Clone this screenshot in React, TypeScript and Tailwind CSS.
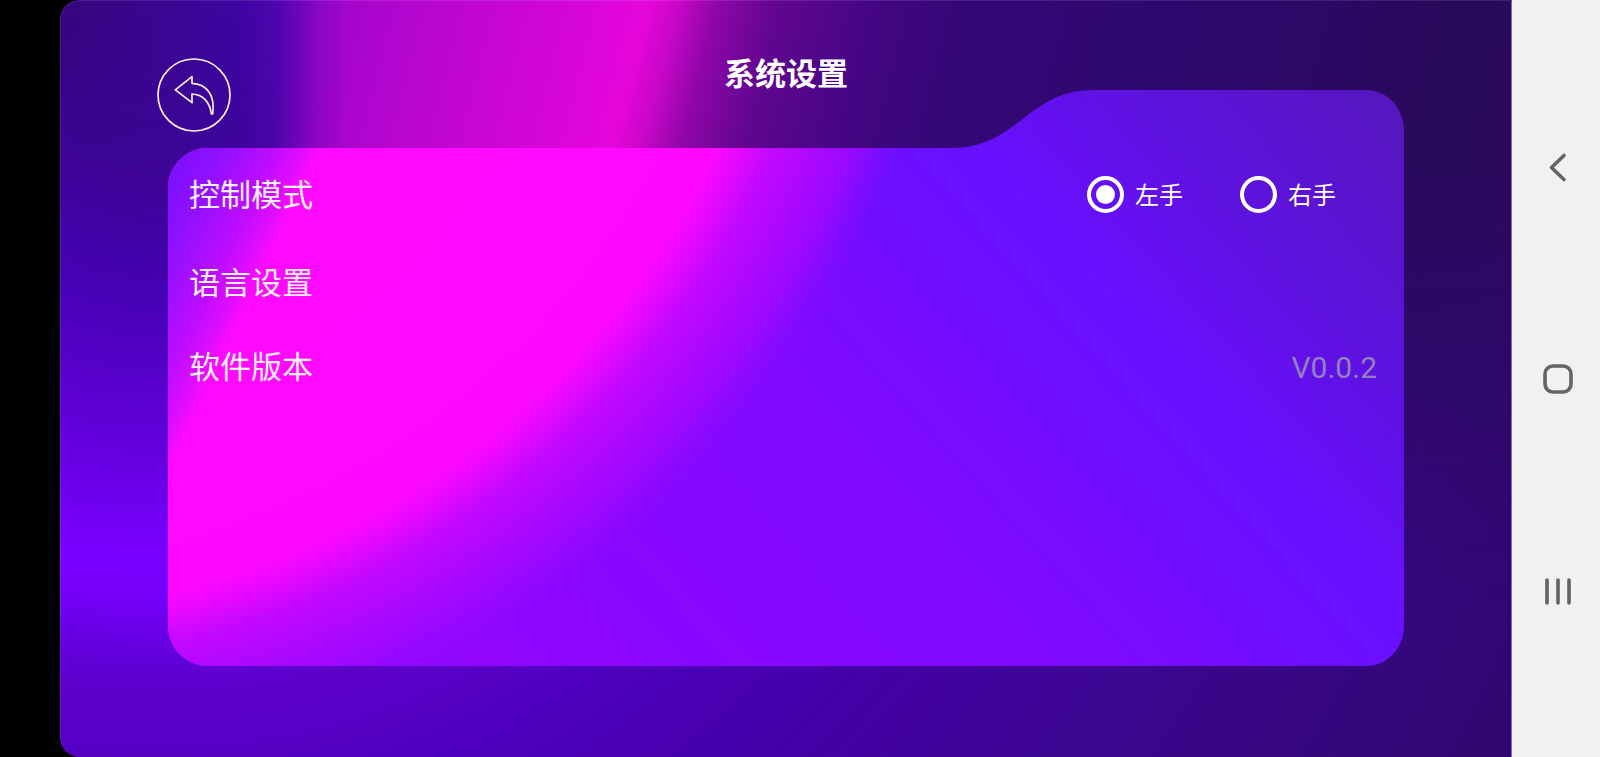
import { useState } from "react";

function Backdrop() {
  return (
    <svg
      className="absolute inset-0 h-full w-full"
      viewBox="60 0 1452 757"
      preserveAspectRatio="none"
      aria-hidden="true"
    >
      <defs>
        <radialGradient id="base" gradientUnits="userSpaceOnUse" cx="155" cy="55" r="1500">
          <stop offset="0" stopColor="#3a0488" />
          <stop offset="0.07" stopColor="#3c0492" />
          <stop offset="0.15" stopColor="#4402b0" />
          <stop offset="0.27" stopColor="#6600e0" />
          <stop offset="0.335" stopColor="#7900ff" />
          <stop offset="0.36" stopColor="#7600fa" />
          <stop offset="0.395" stopColor="#6400de" />
          <stop offset="0.425" stopColor="#5c00ca" />
          <stop offset="0.46" stopColor="#5800c6" />
          <stop offset="0.5" stopColor="#4e00be" />
          <stop offset="0.62" stopColor="#4400a8" />
          <stop offset="0.77" stopColor="#3c0690" />
          <stop offset="1" stopColor="#300870" />
        </radialGradient>
        <linearGradient id="corner" gradientUnits="userSpaceOnUse" x1="60" y1="0" x2="290" y2="90">
          <stop offset="0" stopColor="#36067a" />
          <stop offset="1" stopColor="#4006b4" />
        </linearGradient>
        <linearGradient id="beam" gradientUnits="userSpaceOnUse" x1="300" y1="0" x2="1490" y2="300">
          <stop offset="0" stopColor="#9a06c8" />
          <stop offset="0.1" stopColor="#b606d0" />
          <stop offset="0.23" stopColor="#d806da" />
          <stop offset="0.275" stopColor="#e606da" />
          <stop offset="0.3" stopColor="#c806c8" />
          <stop offset="0.33" stopColor="#9006a8" />
          <stop offset="0.38" stopColor="#600690" />
          <stop offset="0.45" stopColor="#460684" />
          <stop offset="0.53" stopColor="#340776" />
          <stop offset="0.66" stopColor="#2f0870" />
          <stop offset="0.8" stopColor="#2b0966" />
          <stop offset="0.93" stopColor="#280a5a" />
          <stop offset="1" stopColor="#2a0a5c" />
        </linearGradient>
        <linearGradient id="sideFade" gradientUnits="userSpaceOnUse" x1="235" y1="0" x2="350" y2="0">
          <stop offset="0" stopColor="#fff" stopOpacity="0" />
          <stop offset="0.35" stopColor="#fff" stopOpacity="0.15" />
          <stop offset="0.7" stopColor="#fff" stopOpacity="0.75" />
          <stop offset="1" stopColor="#fff" />
        </linearGradient>
        <linearGradient id="downFade" gradientUnits="userSpaceOnUse" x1="0" y1="148" x2="0" y2="600">
          <stop offset="0" stopColor="#fff" />
          <stop offset="0.5" stopColor="#fff" stopOpacity="0.6" />
          <stop offset="1" stopColor="#fff" stopOpacity="0" />
        </linearGradient>
        <linearGradient id="cornerFade" gradientUnits="userSpaceOnUse" x1="0" y1="0" x2="0" y2="200">
          <stop offset="0" stopColor="#fff" />
          <stop offset="1" stopColor="#fff" stopOpacity="0" />
        </linearGradient>
        <mask id="sideMask" maskUnits="userSpaceOnUse" x="60" y="0" width="1452" height="757">
          <rect x="60" width="1452" height="757" fill="url(#sideFade)" />
        </mask>
        <mask id="downMask" maskUnits="userSpaceOnUse" x="60" y="0" width="1452" height="757">
          <rect x="60" width="1452" height="757" fill="url(#downFade)" />
        </mask>
        <mask id="cornerMask" maskUnits="userSpaceOnUse" x="60" y="0" width="1452" height="757">
          <rect x="60" width="1452" height="757" fill="url(#cornerFade)" />
        </mask>
      </defs>
      <rect x="60" width="1452" height="757" fill="url(#base)" />
      <g mask="url(#cornerMask)">
        <rect x="60" width="400" height="200" fill="url(#corner)" />
      </g>
      <g mask="url(#sideMask)">
        <g mask="url(#downMask)">
          <rect x="60" width="1452" height="757" fill="url(#beam)" />
        </g>
      </g>
    </svg>
  );
}

function PanelShape() {
  const outline =
    "M168 188C168 166 186 148 208 148H952C977 148 996 139 1012 127C1038 108 1055 90 1095 90H1366C1387 90 1404 108 1404 130V626C1404 648 1387 666 1366 666H208C186 666 168 648 168 626Z";
  return (
    <svg
      className="absolute inset-0 h-full w-full"
      viewBox="168 90 1236 576"
      preserveAspectRatio="none"
      aria-hidden="true"
    >
      <defs>
        <linearGradient id="field" gradientUnits="userSpaceOnUse" x1="-48" y1="44" x2="707" y2="-640">
          <stop offset="0" stopColor="#9006ff" />
          <stop offset="0.38" stopColor="#800aff" />
          <stop offset="0.5" stopColor="#780cff" />
          <stop offset="0.58" stopColor="#6e0eff" />
          <stop offset="0.68" stopColor="#6810ff" />
          <stop offset="0.74" stopColor="#6510f2" />
          <stop offset="0.82" stopColor="#5e12e0" />
          <stop offset="1" stopColor="#5616c0" />
        </linearGradient>
        <radialGradient id="glow" gradientUnits="userSpaceOnUse" cx="-20" cy="-200" r="1000">
          <stop offset="0" stopColor="#ff0cff" />
          <stop offset="0.81" stopColor="#ff08ff" />
          <stop offset="0.83" stopColor="#ee08ff" />
          <stop offset="0.865" stopColor="#c408ff" />
          <stop offset="0.9" stopColor="#b008ff" />
          <stop offset="0.94" stopColor="#a008ff" stopOpacity="0.85" />
          <stop offset="0.985" stopColor="#8c0aff" stopOpacity="0" />
          <stop offset="1" stopColor="#8c0aff" stopOpacity="0" />
        </radialGradient>
        <linearGradient id="edge" gradientUnits="userSpaceOnUse" x1="168" y1="180" x2="287" y2="236">
          <stop offset="0" stopColor="#7c10ff" />
          <stop offset="0.3" stopColor="#9410ff" />
          <stop offset="0.65" stopColor="#c00cff" />
          <stop offset="0.85" stopColor="#e40cff" />
          <stop offset="1" stopColor="#ff0cff" stopOpacity="0" />
        </linearGradient>
        <clipPath id="panelClip">
          <path d={outline} />
        </clipPath>
      </defs>
      <g clipPath="url(#panelClip)">
        <rect x="168" y="90" width="1236" height="576" fill="url(#field)" />
        <rect x="168" y="90" width="1236" height="576" fill="url(#glow)" />
        <rect x="168" y="90" width="300" height="576" fill="url(#edge)" />
      </g>
    </svg>
  );
}

function HandOption({
  label,
  checked,
  onSelect,
}: {
  label: string;
  checked: boolean;
  onSelect: () => void;
}) {
  return (
    <label className="flex cursor-pointer items-start gap-[11px] text-2xl leading-10">
      <input
        type="radio"
        name="hand"
        checked={checked}
        onChange={onSelect}
        className="peer sr-only"
      />
      <span className="flex size-[37px] items-center justify-center rounded-full border-4 border-white peer-checked:[&>span]:bg-white">
        <span className="size-[19px] rounded-full" />
      </span>
      {label}
    </label>
  );
}

function NavButton({ label, children }: { label: string; children: React.ReactNode }) {
  return (
    <button type="button" aria-label={label} className="flex h-[28%] w-full items-center justify-center">
      <svg
        width="32"
        height="32"
        viewBox="0 0 32 32"
        fill="none"
        stroke="#646464"
        strokeWidth="3.6"
        strokeLinecap="round"
        strokeLinejoin="round"
      >
        {children}
      </svg>
    </button>
  );
}

export default function App() {
  const [hand, setHand] = useState("left");

  return (
    <div className="flex h-screen bg-black font-['Roboto','Noto_Sans_CJK_SC',sans-serif]">
      <main className="relative ml-15 flex flex-1 flex-col overflow-hidden rounded-l-[20px] text-white">
        <Backdrop />
        <div className="pointer-events-none absolute inset-0 rounded-l-[20px] border-t border-l border-r border-white/10 border-r-white/40" />

        <header className="relative z-10 grid h-[90px] shrink-0 grid-cols-[1fr_auto_1fr] items-start px-[97px] pt-[58px]">
          <button type="button" aria-label="返回" className="size-[74px]">
            <svg
              width="74"
              height="74"
              viewBox="0 0 74 74"
              fill="none"
              stroke="#fdf0ff"
              strokeWidth="1.7"
              strokeLinejoin="round"
            >
              <circle cx="37" cy="37" r="36" />
              <path d="M18.3 31.8 35 18.7V25.3C50 26 58.5 37.5 55.6 56H54.4C53 44 45.5 36.2 35 36V44.7Z" />
            </svg>
          </button>
          <h1 className="text-[31px] leading-[34px] font-bold">系统设置</h1>
        </header>

        <section className="relative mx-[108px] mb-[91px] flex-1">
          <PanelShape />
          <div className="relative flex flex-col pt-[62px] pr-[27px] pl-[21px] text-[31px] leading-10 text-[#fff0ff]">
            <div role="radiogroup" aria-labelledby="mode" className="flex h-[88px] items-center justify-between">
              <span id="mode">控制模式</span>
              <div className="mr-[41px] flex gap-[57px] text-white">
                <HandOption label="左手" checked={hand === "left"} onSelect={() => setHand("left")} />
                <HandOption label="右手" checked={hand === "right"} onSelect={() => setHand("right")} />
              </div>
            </div>
            <button type="button" className="flex h-[88px] items-center text-left">
              语言设置
            </button>
            <div className="flex h-20 items-center justify-between">
              <span>软件版本</span>
              <span className="text-3xl text-[#9480be]">V0.0.2</span>
            </div>
          </div>
        </section>
      </main>

      <nav className="flex w-22 flex-col items-center justify-center bg-[#f1f1f1] pt-[2px] pl-1">
        <NavButton label="后退">
          <path d="M22 3.5 9.5 15.5 22 27.5" />
        </NavButton>
        <NavButton label="主屏幕">
          <rect x="3" y="3" width="26" height="26" rx="8" />
        </NavButton>
        <NavButton label="最近任务">
          <path d="M5 5V28M16 5V28M27 5V28" />
        </NavButton>
      </nav>
    </div>
  );
}
